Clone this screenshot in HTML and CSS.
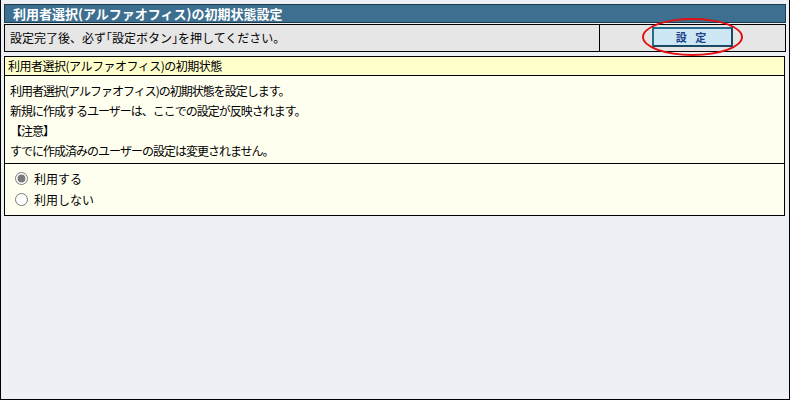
FILE: index.html
```html
<!DOCTYPE html>
<html>
<head>
    <meta charset="utf-8">
    <title>利用者選択(アルファオフィス)の初期状態設定</title>
    <link rel="stylesheet" href="styles.css">
</head>
<body>
    <div class="frame">
        <div class="title">利用者選択(アルファオフィス)の初期状態設定</div>

        <div class="notice">
            <div class="notice-text">設定完了後、必ず｢設定ボタン｣を押してください。</div>
            <div class="notice-action">
                <button class="btn-set">設 定</button>
                <span class="mark"></span>
            </div>
        </div>

        <div class="section">
            <div class="section-head">利用者選択(アルファオフィス)の初期状態</div>
            <div class="section-desc">
                <p>利用者選択(アルファオフィス)の初期状態を設定します。</p>
                <p>新規に作成するユーザーは、ここでの設定が反映されます。</p>
                <p>【注意】</p>
                <p>すでに作成済みのユーザーの設定は変更されません。</p>
            </div>
            <div class="section-options">
                <label class="opt"><input type="radio" name="use" checked> 利用する</label>
                <label class="opt"><input type="radio" name="use"> 利用しない</label>
            </div>
        </div>
    </div>
</body>
</html>
```

FILE: styles.css
```css
html, body {
    margin: 0;
    height: 100%;
}

body {
    font-family: "Noto Sans CJK JP", "DejaVu Sans", sans-serif;
    font-size: 12px;
    color: #000;
}

.frame {
    box-sizing: border-box;
    height: 400px;
    background: #edf1f5;
    border: 1px solid #000;
    border-top: none;
    padding: 4px 3px 0 3px;
}

.title {
    height: 17px;
    line-height: 17px;
    background: #3d6f91;
    border: 1px solid #1f3a4c;
    color: #fff;
    font-weight: bold;
    font-size: 13px;
    padding-left: 8px;
}

.notice {
    display: flex;
    margin-top: 1px;
    height: 26px;
    border: 1px solid #000;
    background: #e6e6e6;
}

.notice-text {
    flex: 1;
    line-height: 26px;
    padding-left: 5px;
    font-size: 12px;
    border-right: 1px solid #000;
}

.notice-action {
    position: relative;
    width: 185px;
    display: flex;
    align-items: center;
    justify-content: center;
}

.btn-set {
    width: 81px;
    height: 20px;
    margin-top: -2px;
    padding: 0;
    background: #cde8f4;
    border: 2px solid #2b6d8c;
    border-right-color: #1b4b63;
    border-bottom-color: #1b4b63;
    color: #1c3f8c;
    font-family: inherit;
    font-weight: bold;
    font-size: 11px;
    letter-spacing: 3px;
}

.mark {
    position: absolute;
    left: 42px;
    top: -7px;
    width: 97px;
    height: 34px;
    border: 2px solid #e01010;
    border-radius: 50%;
}

.section {
    margin-top: 4px;
    margin-right: 1px;
    border: 1px solid #000;
    background: #fffff0;
}

.section-head {
    height: 18px;
    line-height: 18px;
    background: #ffffcc;
    border-bottom: 1px solid #000;
    padding-left: 3px;
    letter-spacing: -0.5px;
}

.section-desc {
    padding: 5px 0 2px 5px;
    border-bottom: 1px solid #000;
    letter-spacing: -1px;
}

.section-desc p {
    margin: 0;
    line-height: 20px;
    height: 20px;
}

.section-options {
    padding: 4px 0 5px 8px;
}

.opt {
    display: flex;
    align-items: center;
    height: 21px;
}

.opt input {
    margin: 0 6px 0 2px;
    width: 13px;
    height: 13px;
    accent-color: #7a7a7a;
}
```
